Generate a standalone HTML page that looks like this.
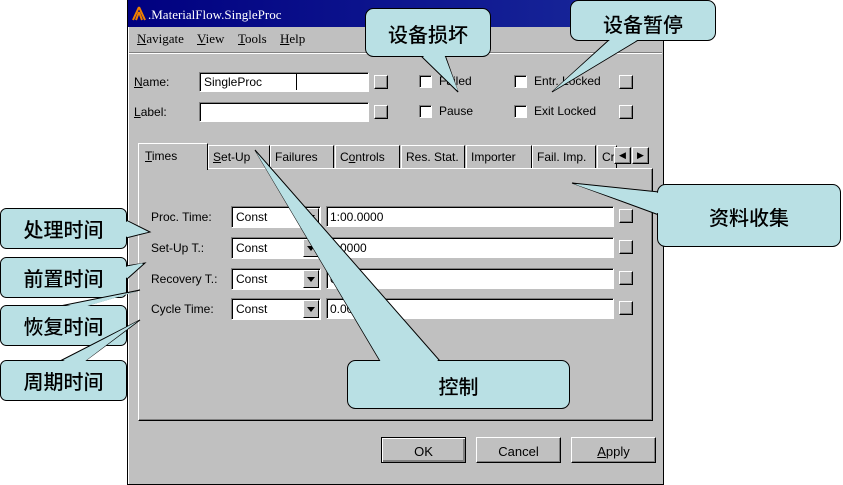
<!DOCTYPE html>
<html><head><meta charset="utf-8"><style>
*{margin:0;padding:0;box-sizing:border-box}
body{width:843px;height:485px;background:#fff;position:relative;overflow:hidden;font-family:"Liberation Sans",Arial,sans-serif;font-size:12px;color:#000}
.a{position:absolute}
.win{left:127px;top:0;width:537px;height:485px;background:#c0c0c0;border:1px solid #000;border-top:none;box-shadow:inset 1px 1px #fff}
.title{left:128px;top:0;width:535px;height:27px;background:linear-gradient(90deg,#000080,#1a2a9c);color:#fff;font-family:"Liberation Serif",serif;font-size:13px;padding:7px 0 0 20px}
.menu{font-family:"Liberation Serif",serif;font-size:13px}
.in{background:#fff;border:1px solid;border-color:#808080 #fff #fff #808080;box-shadow:inset 1px 1px #000}
.sb{width:14px;height:14px;border:1px solid;border-color:#fff #000 #000 #fff;box-shadow:inset -1px -1px #808080}
.cb{width:13px;height:13px;background:#fff;border:1px solid;border-color:#808080 #fff #fff #808080;box-shadow:inset 1px 1px #000}
.lbl{font-size:12px}
.tab{top:145px;height:23px;border:1px solid;border-color:#fff #000 transparent #fff;border-bottom:none;padding:4px 0 0 4px;font-size:12px;white-space:nowrap;overflow:hidden}
.btn{top:437px;width:85px;height:26px;border:1px solid;border-color:#fff #000 #000 #fff;box-shadow:inset -1px -1px #808080;text-align:center;padding-top:6px;font-size:13px}
.combo{width:90px;height:22px}
.arr{right:1px;top:1px;width:16px;height:18px;background:#c0c0c0;border:1px solid;border-color:#fff #000 #000 #fff}
.arr:after{content:"";position:absolute;left:3px;top:6px;border:4px solid transparent;border-top:5px solid #000}
.ct{font-family:"Liberation Sans","Noto Sans CJK SC",sans-serif;font-size:20px;position:absolute;text-align:center;font-weight:500}
</style></head><body>
<div class="a win"></div>
<div class="a title">.MaterialFlow.SingleProc</div>
<svg class="a" style="left:132px;top:6px" width="14" height="16"><path d="M7 1L1 14M7 1L13 14M7 6L4 14M7 6L10 14" stroke="#f08000" stroke-width="2" fill="none"/></svg>
<div class="a menu" style="left:137px;top:31px"><u>N</u>avigate</div>
<div class="a menu" style="left:197px;top:31px"><u>V</u>iew</div>
<div class="a menu" style="left:238px;top:31px"><u>T</u>ools</div>
<div class="a menu" style="left:280px;top:31px"><u>H</u>elp</div>
<div class="a" style="left:129px;top:52px;width:533px;height:2px;border-top:1px solid #808080;border-bottom:1px solid #fff"></div>

<div class="a lbl" style="left:134px;top:75px"><u>N</u>ame:</div>
<div class="a in" style="left:199px;top:72px;width:170px;height:20px;padding:2px 4px">SinglePro<span>c</span></div>
<div class="a" style="left:296px;top:74px;width:1px;height:16px;background:#000"></div>
<div class="a sb" style="left:374px;top:75px"></div>
<div class="a lbl" style="left:134px;top:105px"><u>L</u>abel:</div>
<div class="a in" style="left:199px;top:102px;width:170px;height:20px"></div>
<div class="a sb" style="left:374px;top:105px"></div>

<div class="a cb" style="left:419px;top:75px"></div><div class="a lbl" style="left:439px;top:74px">Failed</div>
<div class="a cb" style="left:419px;top:105px"></div><div class="a lbl" style="left:439px;top:104px">Pause</div>
<div class="a cb" style="left:514px;top:75px"></div><div class="a lbl" style="left:534px;top:74px">Entr. Locked</div>
<div class="a cb" style="left:514px;top:105px"></div><div class="a lbl" style="left:534px;top:104px">Exit Locked</div>
<div class="a sb" style="left:619px;top:75px"></div>
<div class="a sb" style="left:619px;top:105px"></div>

<div class="a" style="left:138px;top:168px;width:515px;height:253px;border:1px solid;border-color:#fff #000 #000 #fff;box-shadow:inset -1px -1px #808080"></div>
<div class="a tab" style="left:138px;top:143px;width:70px;height:27px;background:#c0c0c0;padding-top:5px;padding-left:6px"><u>T</u>imes</div>
<div class="a tab" style="left:208px;width:62px"><u>S</u>et-Up</div>
<div class="a tab" style="left:270px;width:64px">Failures</div>
<div class="a tab" style="left:335px;width:65px">C<u>o</u>ntrols</div>
<div class="a tab" style="left:401px;width:64px">Res. Stat.</div>
<div class="a tab" style="left:466px;width:66px">Importer</div>
<div class="a tab" style="left:532px;width:64px">Fail. Imp.</div>
<div class="a tab" style="left:597px;width:20px">Cr</div>
<div class="a sb" style="left:614px;top:147px;width:17px;height:17px;background:#c0c0c0;font-size:9px;text-align:center;line-height:15px">◀</div>
<div class="a sb" style="left:632px;top:147px;width:17px;height:17px;background:#c0c0c0;font-size:9px;text-align:center;line-height:15px">▶</div>

<div class="a lbl" style="left:151px;top:210px">Proc. Time:</div>
<div class="a lbl" style="left:151px;top:241px">Set-Up T.:</div>
<div class="a lbl" style="left:151px;top:272px">Recovery T.:</div>
<div class="a lbl" style="left:151px;top:302px">Cycle Time:</div>

<div class="a in combo" style="left:231px;top:206px;padding:3px 4px">Const<div class="a arr"></div></div>
<div class="a in combo" style="left:231px;top:237px;padding:3px 4px">Const<div class="a arr"></div></div>
<div class="a in combo" style="left:231px;top:268px;padding:3px 4px">Const<div class="a arr"></div></div>
<div class="a in combo" style="left:231px;top:298px;padding:3px 4px">Const<div class="a arr"></div></div>
<div class="a in" style="left:326px;top:206px;width:288px;height:21px;padding:3px 3px">1:00.0000</div>
<div class="a in" style="left:326px;top:237px;width:288px;height:21px;padding:3px 3px">0.0000</div>
<div class="a in" style="left:326px;top:268px;width:288px;height:21px;padding:3px 3px">0.0000</div>
<div class="a in" style="left:326px;top:298px;width:288px;height:21px;padding:3px 3px">0.0000</div>
<div class="a sb" style="left:619px;top:209px"></div>
<div class="a sb" style="left:619px;top:240px"></div>
<div class="a sb" style="left:619px;top:271px"></div>
<div class="a sb" style="left:619px;top:301px"></div>

<div class="a btn" style="left:381px;border-color:#000;box-shadow:inset 1px 1px #fff,inset -2px -2px #808080">OK</div>
<div class="a btn" style="left:476px">Cancel</div>
<div class="a btn" style="left:571px"><u>A</u>pply</div>

<svg class="a" style="left:0;top:0" width="843" height="485">
<g fill="#b9e0e4" stroke="#000" stroke-width="1">
<polygon points="420,55 458,92 445,55"/><rect x="365.5" y="8.5" width="125" height="48" rx="8"/><polygon points="421,54 458,91 444,54" stroke="none"/>
<polygon points="610,39 552,92 640,39"/><rect x="570.5" y="0.5" width="145" height="40" rx="8"/><polygon points="611,39 553,91 639,39" stroke="none"/>
<polygon points="659,192 572,183 659,215"/><rect x="657.5" y="184.5" width="183" height="62" rx="8"/><polygon points="660,193 574,184 660,214" stroke="none"/>
<polygon points="380,361 255,150 440,361"/><rect x="347.5" y="360.5" width="222" height="48" rx="8"/><polygon points="381,362 256,152 439,362" stroke="none"/>
<g>
<polygon points="126,220 150,232 126,238"/><rect x="0.5" y="208.5" width="126" height="40" rx="6"/><polygon points="125,221 148,232 125,237" stroke="none"/>
<polygon points="126,266 145,263 126,280"/><rect x="0.5" y="257.5" width="126" height="40" rx="6"/><polygon points="125,267 143,263 125,279" stroke="none"/>
<polygon points="60,306 140,290 85,306"/><rect x="0.5" y="305.5" width="126" height="40" rx="6"/><polygon points="61,307 138,291 84,307" stroke="none"/>
<polygon points="60,361 140,320 85,361"/><rect x="0.5" y="360.5" width="126" height="40" rx="6"/><polygon points="61,362 138,321 84,362" stroke="none"/>
</g></g></svg>
<div class="ct" style="left:365px;top:19px;width:126px">设备损坏</div>
<div class="ct" style="left:570px;top:9px;width:146px">设备暂停</div>
<div class="ct" style="left:657px;top:202px;width:184px">资料收集</div>
<div class="ct" style="left:347px;top:371px;width:223px">控制</div>
<div class="ct" style="left:0;top:214px;width:127px">处理时间</div>
<div class="ct" style="left:0;top:263px;width:127px">前置时间</div>
<div class="ct" style="left:0;top:311px;width:127px">恢复时间</div>
<div class="ct" style="left:0;top:366px;width:127px">周期时间</div>
</body></html>
